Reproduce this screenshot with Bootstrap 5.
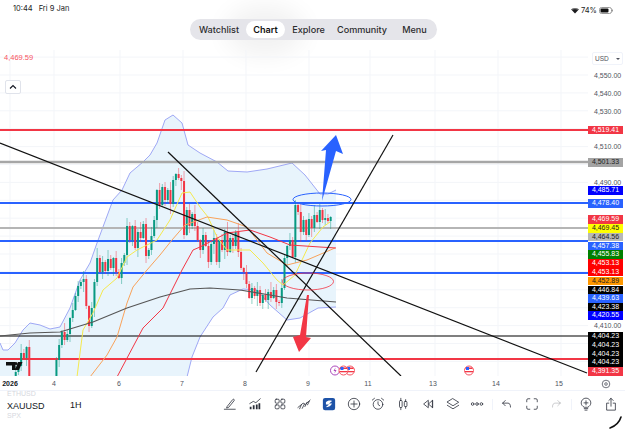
<!DOCTYPE html>
<html lang="en">
<head>
  <meta charset="UTF-8">
  <meta name="viewport" content="width=device-width, initial-scale=1.0">
  <title>XAUUSD chart</title>
  <link href="https://cdn.jsdelivr.net/npm/bootstrap@5.3.0/dist/css/bootstrap.min.css" rel="stylesheet">
  <style>
    html, body { height: 431px; overflow: hidden; background: #fff; }
    body { font-family: "Liberation Sans", Arial, sans-serif; color: #131722; }
    .app-page { width: 625px; height: 431px; position: relative; overflow: hidden; }
    .status-row { height: 17px; padding: 3px 12px 0 13px; font: 7.5px/11px Inter, "Liberation Sans", sans-serif; color: #1c1c1e; }
    .status-left { gap: 6px; }
    .status-right { gap: 2px; }
    .nav-holder { height: 33px; position: relative; align-items: flex-start; padding-top: 2px; }
    .nav-holder::before { content: ""; position: absolute; left: 225px; top: -12px; width: 80px; height: 52px; border-radius: 50%; background: #000; opacity: .05; filter: blur(12px); }
    .tab-pill { position: relative; width: 247px; height: 21px; background: #e5e5ea; border-radius: 10.5px; padding: 2px 0 0 2px; margin-left: 2px; }
    .tab-pill .nav-link { font: 500 9.1px/17px Inter, "Liberation Sans", sans-serif; color: #2c2c2e; padding: 0; height: 17px; border-radius: 8.5px; text-align: center; background: none; }
    .tab-pill .nav-link.active { background: #fff; color: #111; font-weight: 600; }
    .tab-watch { width: 54px; } .tab-chart { width: 39px; } .tab-explore { width: 47px; } .tab-comm { width: 60px; } .tab-menu { width: 45px; }
    .chart-box { width: 625px; height: 326px; position: relative; }
    .chart-svg { display: block; }
    .price-tag { position: absolute; left: 588px; width: 35px; height: 8.7px; font-size: 7px; line-height: 8.7px; text-align: center; color: #fff; }
    .price-plain { position: absolute; left: 594px; font-size: 7px; line-height: 9px; color: #50535e; }
    .last-price { position: absolute; left: 4px; top: 3px; font-size: 7.5px; line-height: 9px; color: #f7525f; }
    .usd-box { position: absolute; left: 592px; top: 2px; width: 31px; height: 13px; padding-left: 2px; background: #fff; border: 1px solid #f0f3fa; border-radius: 2px; font-size: 6.5px; line-height: 11px; color: #50535e; }
    .usd-box i { position: absolute; right: 2px; top: 5px; border: 2px solid transparent; border-top-color: #50535e; }
    .fold-btn { position: absolute; left: 5px; top: 30px; width: 16px; height: 14px; background: #fff; border: 1px solid #e0e3eb; border-radius: 2px; }
    .time-row { height: 15px; position: relative; border-bottom: 1px solid #f0f3fa; }
    .time-row span { position: absolute; top: 3px; font-size: 7px; line-height: 9px; color: #50535e; transform: translateX(-50%); }
    .time-row .year-tag { left: 10px; color: #131722; font-weight: 700; }
    .tool-row { height: 40px; }
    .symbol-col { width: 70px; padding-left: 7px; font-size: 9px; line-height: 11px; height: 29px; overflow: hidden; }
    .symbol-col .faded { color: #d6d8de; font-size: 7px; line-height: 8px; }
    .symbol-col .faded-top { height: 6px; overflow: visible; margin-top: -1px; }
    .symbol-main { margin-top: 5px; }
    .res-tag { width: 12px; font-size: 9px; line-height: 11px; padding-top: 9px; }
    .tool-icons { margin-left: 136px; margin-top: 4px; height: 18px; }
    .tool-slot { width: 24.7px; height: 18px; display: flex; align-items: center; justify-content: center; flex: none; }
    .tool-gap { width: 1px; height: 11px; margin: 0 2px; background: #f0f3fa; flex: none; }
    .screen-corner { position: absolute; right: 2px; bottom: 0; }
  </style>
</head>
<body>
  <div class="app-page d-flex flex-column">
    <div class="status-row d-flex justify-content-between">
      <div class="d-flex status-left"><span>10:44</span><span>Fri 9 Jan</span></div>
      <div class="d-flex align-items-center status-right">
        <svg width="8" height="7" viewBox="0 0 8 7"><path d="M4 6.600 0.200 2.400C2.300.4 5.700.4 7.800 2.400Z" fill="#1c1c1e"/><path d="M1.400 2.500C3 1.300 5 1.300 6.600 2.500" stroke="#fff" stroke-width=".5" fill="none"/></svg>
        <span>74%</span>
        <svg width="14" height="7" viewBox="0 0 14 7"><rect x=".5" y=".5" width="12" height="6" rx="2" fill="#fff" stroke="#999"/><rect x="1.500" y="1.500" width="8" height="4" rx="1" fill="#111"/><rect x="13" y="2.500" width="1" height="2" fill="#999"/></svg>
      </div>
    </div>
    <div class="nav-holder d-flex justify-content-center">
      <ul class="nav tab-pill">
        <li class="nav-item"><a class="nav-link tab-watch" href="#">Watchlist</a></li>
        <li class="nav-item"><a class="nav-link active tab-chart" href="#">Chart</a></li>
        <li class="nav-item"><a class="nav-link tab-explore" href="#">Explore</a></li>
        <li class="nav-item"><a class="nav-link tab-comm" href="#">Community</a></li>
        <li class="nav-item"><a class="nav-link tab-menu" href="#">Menu</a></li>
      </ul>
    </div>

    <div class="chart-box" id="chartBox">
      <svg class="chart-svg" id="chartSvg" width="625" height="326" viewBox="0 50 625 326"></svg>
      <div class="last-price">4,469.59</div>
      <div class="usd-box">USD<i></i></div>
      <div class="fold-btn d-flex align-items-center justify-content-center">
        <svg width="8" height="6" viewBox="0 0 8 6"><path d="M1 4.500 4 1.500 7 4.500" fill="none" stroke="#131722" stroke-width="1.100"/></svg>
      </div>
    </div>

    <div class="time-row" id="timeRow"><span class="year-tag">2026</span></div>

    <div class="tool-row d-flex position-relative">
      <div class="symbol-col">
        <div class="faded faded-top">ETHUSD</div>
        <div class="symbol-main">XAUUSD</div>
        <div class="faded">SPX</div>
      </div>
      <div class="res-tag">1H</div>
      <div class="tool-icons d-flex align-items-center" id="toolIcons"></div>
      <svg class="screen-corner" width="20" height="16" viewBox="0 0 20 16"><path d="M18 2C16.500 7 12.500 11 7 13" fill="none" stroke="#111" stroke-width="1.600" stroke-linecap="round"/></svg>
    </div>
  </div>

  <script src="https://cdn.jsdelivr.net/npm/bootstrap@5.3.0/dist/js/bootstrap.bundle.min.js"></script>
  <script>
    const RED = '#f23645', BLUE = '#2962ff', GREEN = '#089981';
    const py = p => 75 + (4550 - p) * 1.79;
    const svg = [];

    function pts(a) { return a.map(p => p.join(',')).join(' '); }
    function line(x1, y1, x2, y2, col, w, op) {
      svg.push(`<line x1="${x1}" y1="${y1}" x2="${x2}" y2="${y2}" stroke="${col}" stroke-width="${w}" opacity="${op || 1}"/>`);
    }
    function poly(a, col, w, op) {
      svg.push(`<polyline points="${pts(a)}" fill="none" stroke="${col}" stroke-width="${w}" opacity="${op || 1}" stroke-linejoin="round"/>`);
    }

    // grid
    [10, 54, 120, 183, 246, 309, 370, 435, 498, 561].forEach(x => line(x, 50, x, 376, '#f3f5f9', 1));
    for (let p = 4560; p >= 4390; p -= 10) line(0, py(p), 588, py(p), '#f3f5f9', 1);

    // bollinger band
    const upper = [[0,343],[3,350],[8,350],[15,343],[23,330],[30,323],[40,325],[50,329],[60,327],[70,308],[80,280],[90,263],[97,243],[113,200],[122,190],[130,173],[143,162],[150,155],[157,143],[165,120],[173,115],[182,123],[188,145],[200,153],[217,162],[228,171],[247,172],[267,169],[292,163],[305,175],[320,194],[328,194],[336,190]];
    const lower = [[187,377],[192,357],[200,337],[213,317],[223,308],[230,295],[243,289],[257,290],[270,305],[287,320],[300,318],[318,308],[336,307]];
    svg.push(`<polygon points="${pts(upper)} ${pts(lower.slice().reverse())} 0,377" fill="#e8f4fc"/>`);
    poly(upper, '#9fa8f5', 1);
    poly(lower, '#9fa8f5', 1);

    // horizontal levels
    [[130, RED, 2], [162, '#a6a6a6', 2.500], [203, BLUE, 2], [228, '#b5b5b5', 2], [241, BLUE, 2], [273, BLUE, 2], [336, '#000', 1.200], [359, RED, 2]]
      .forEach(l => line(0, l[0], 588, l[0], l[1], l[2]));

    // candles, close as pixel y
    const closes = [378,372,366,353,358,347,378,400,400,400,400,400,400,400,400,400,
      360,345,332,340,334,318,310,296,286,282,279,306,326,308,282,258,272,262,271,259,268,258,272,278,263,255,
      226,240,226,248,232,238,224,256,250,236,220,190,205,187,200,190,204,180,174,178,181,235,210,226,214,226,
      240,250,235,246,262,244,238,262,240,250,232,252,238,246,232,252,268,272,284,298,288,296,290,303,295,300,
      292,298,290,302,303,288,258,246,240,257,205,212,232,220,235,219,228,215,222,210,220,218,221,217];
    const wicks = [3,6,2,9,4,1,7,3,5,2,8,4,1,6,3,10];
    const bar = (i) => 13 + i * 2.715;
    closes.forEach((c, i) => {
      if (i === 0 || c >= 400) return;
      const o = closes[i - 1] >= 400 ? c + 20 : closes[i - 1];
      const x = bar(i), col = c < o ? GREEN : RED;
      const top = Math.min(o, c) - wicks[i % 16], bot = Math.max(o, c) + wicks[(i + 5) % 16];
      line(x, top, x, bot, col, 1, .45);
      const h = Math.max(Math.abs(o - c), 1);
      svg.push(`<rect x="${x - 1}" y="${Math.min(o, c)}" width="2" height="${h}" fill="${col}"/>`);
    });

    // moving averages
    poly([[77,377],[80,353],[83,330],[93,313],[103,290],[117,278],[127,257],[137,250],[157,240],[170,220],[182,193],[190,192],[200,207],[208,217],[217,237],[227,250],[250,250],[263,263],[277,280],[283,285],[295,275],[302,260],[310,243],[323,227],[330,222]], '#f5e94e', 1);
    poly([[90,377],[107,355],[117,337],[127,303],[133,287],[147,270],[160,255],[172,240],[185,225],[207,217],[227,220],[247,227],[267,253],[287,265],[307,260],[335,248]], '#f9a25a', 1);
    poly([[117,377],[143,328],[163,308],[182,270],[193,250],[200,247],[227,233],[250,230],[270,237],[290,245],[320,247],[336,248]], '#f23645', 1);
    poly([[0,336],[30,333],[60,332],[93,322],[127,308],[160,297],[190,289],[210,288],[240,290],[270,295],[287,298],[336,302]], '#555', 1.100);

    // trend lines
    line(0, 143, 587, 373, '#111', 1.200);
    line(168, 152, 401, 376, '#111', 1.200);
    line(256, 372, 393, 135, '#111', 1.200);

    // ellipses and arrows
    svg.push(`<ellipse cx="322" cy="199.500" rx="29" ry="6.500" fill="none" stroke="${BLUE}" stroke-width="1"/>`);
    svg.push(`<ellipse cx="308" cy="281.500" rx="25.500" ry="8.500" fill="none" stroke="${RED}" stroke-width="1" opacity=".8"/>`);
    svg.push(`<polygon points="322,201 326,150 321,151 336,135 343,154 336,151" fill="${BLUE}"/>`);
    svg.push(`<polygon points="307,295 309,295 306,337 311,338 299,352 293,337 300,335" fill="${RED}"/>`);

    // TV logo
    svg.push(`<path d="M6 362H15.500V370H12V365.500H6ZM18 362H22.500L19 370H15Z" fill="#111"/><circle cx="16" cy="363.500" r="1.500" fill="#111"/>`);

    // event markers
    function flag(x) {
      return `<circle cx="${x}" cy="370.500" r="4.500" fill="#fff" stroke="#f7525f"/><rect x="${x - 3.500}" y="367.500" width="7" height="1.500" fill="#f23645"/><rect x="${x - 4}" y="371" width="8" height="1.300" fill="#f23645"/><rect x="${x - 3}" y="367" width="3" height="3" fill="#2962ff"/>`;
    }
    svg.push(`<circle cx="335" cy="370.500" r="4.500" fill="#fff" stroke="#ab47bc"/><path d="M335.500 367.500 333.500 371H335L334.500 373.500 336.500 370H335Z" fill="#ab47bc"/>`);
    svg.push(flag(350), flag(343.500), flag(469));

    document.getElementById('chartSvg').innerHTML = svg.join('');

    // price axis
    const box = document.getElementById('chartBox');
    [[4550, 75], [4540, 93], [4530, 111], [4510, 146.500], [4490, 182.500], [4410, 325.700]].forEach(p => {
      box.insertAdjacentHTML('beforeend', `<div class="price-plain" style="top:${p[1] - 54.500}px">4,${p[0] - 4000}.00</div>`);
    });
    const tags = [
      ['4,519.41', 125.500, RED, '#fff'], ['4,501.33', 158, '#a3a3a3', '#222'], ['4,485.71', 186, '#0000ff', '#fff'], ['4,478.40', 199.300, BLUE, '#fff'],
      ['4,469.59', 215, RED, '#fff'], ['4,469.45', 224, '#ffff00', '#222'], ['4,464.56', 232.500, '#b8b8b8', '#222'], ['4,457.38', 241.500, BLUE, '#fff'],
      ['4,455.83', 250.200, '#008000', '#fff'], ['4,453.13', 259, '#ff0000', '#fff'], ['4,453.13', 267.700, '#ff0000', '#fff'], ['4,452.89', 276.700, '#ff9800', '#222'],
      ['4,446.84', 285.500, '#000', '#fff'], ['4,439.63', 294.200, BLUE, '#fff'], ['4,423.38', 302.900, '#000', '#fff'], ['4,420.55', 311.300, '#0000ff', '#fff'],
      ['4,404.23', 332.200, '#000', '#fff'], ['4,404.23', 340.900, '#000', '#fff'], ['4,404.23', 349.600, '#000', '#fff'], ['4,404.23', 358.300, '#000', '#fff'],
      ['4,391.35', 367.300, RED, '#fff']
    ];
    tags.forEach(t => {
      box.insertAdjacentHTML('beforeend', `<div class="price-tag" style="top:${t[1] - 50}px;background:${t[2]};color:${t[3]}">${t[0]}</div>`);
    });

    // time axis
    const timeRow = document.getElementById('timeRow');
    [[54, '4'], [119, '6'], [182, '7'], [245, '8'], [308, '9'], [368, '11'], [433, '13'], [496, '14'], [559, '15']].forEach(t => {
      timeRow.insertAdjacentHTML('beforeend', `<span style="left:${t[0]}px">${t[1]}</span>`);
    });
    timeRow.insertAdjacentHTML('beforeend', `<svg style="position:absolute;left:601px;top:3px" width="10" height="10" viewBox="0 0 10 10"><circle cx="5" cy="5" r="3.800" fill="none" stroke="#50535e" stroke-width=".8"/><circle cx="5" cy="5" r="1.300" fill="none" stroke="#50535e" stroke-width=".8"/></svg>`);

    // toolbar icons
    const S = 'fill="none" stroke="#2a2e39" stroke-width=".9" stroke-linecap="round" stroke-linejoin="round"';
    const icons = [
      `<path d="M5 10.500 11 3C12 1.800 13.500 3 12.700 4.200L6.500 11.800 4.500 12.500Z M1.500 14H14" ${S}/>`,
      `<path d="M2 7.500 6 5 9 6.500 14 2" ${S}/><path d="M2 14V11H4V14ZM5.500 14V9.500H7.500V14ZM9 14V8.500H11V14ZM12 14V7H14V14Z" fill="#2a2e39"/>`,
      `<rect x="2.500" y="2.500" width="4.500" height="4.500" rx="1.200" ${S}/><rect x="9" y="2.500" width="4.500" height="4.500" rx="1.200" ${S}/><rect x="2.500" y="9" width="4.500" height="4.500" rx="1.200" ${S}/><rect x="9" y="9" width="4.500" height="4.500" rx="1.200" ${S}/>`,
      `<path d="M1 12 7 7 9.500 8.500 15 3.500M3 13.500 5 9M6 13 8.500 8M9 11 11.500 6M12 9 14 5" ${S}/>`,
      `<rect x="1" y="1" width="14" height="14" rx="2.500" fill="#1e53a8"/><path d="M4.500 6C6 4 9 3.500 11.500 4.500L8 7.500H11.500C10 10.500 7 12 4.500 11.500L8 8.500H4.500Z" fill="#fff"/>`,
      `<circle cx="8" cy="8" r="6.500" ${S}/><path d="M8 4.500V11.500M4.500 8H11.500" ${S}/>`,
      `<circle cx="8" cy="8.500" r="5.500" ${S}/><path d="M8 5.500V8.500L10 10M1.500 3.500 4 1.500M14.500 3.500 12 1.500" ${S}/>`,
      `<rect x="4" y="4" width="3" height="8" rx="1" ${S}/><rect x="9.500" y="5" width="3" height="6" rx="1" ${S}/><path d="M5.500 1.500V4M5.500 12V14.500M11 3V5M11 11V13" ${S}/>`,
      `<path d="M8 4 3 8 8 12ZM13 4 8.500 8 13 12Z M13 4V12" ${S}/>`,
      `<path d="M8 2 14.500 6 8 10 1.500 6Z M1.500 9.500 8 13.500 14.500 9.500" ${S}/>`,
      `<circle cx="3" cy="8" r="1.500" ${S}/><circle cx="8" cy="8" r="1.500" ${S}/><circle cx="13" cy="8" r="1.500" ${S}/>`,
      null,
      `<path d="M6 4 3 7 6 10M3 7H9C11 7 12 8.500 12 11.500" ${S}/>`,
      `<path d="M2 5.500V3.500C2 2.500 2.500 2 3.500 2H5.500M10.500 2H12.500C13.500 2 14 2.500 14 3.500V5.500M14 10.500V12.500C14 13.500 13.500 14 12.500 14H10.500M5.500 14H3.500C2.500 14 2 13.500 2 12.500V10.500" ${S}/>`,
      `<path d="M10 4 13 7 10 10M13 7H7C5 7 4 8.500 4 11.500" ${S} opacity=".3"/>`,
      null,
      `<path d="M5.500 11.500C4 10.500 2.500 9 2.500 6.800A5.500 5.500 0 0 1 13.500 6.800C13.500 9 12 10.500 10.500 11.500ZM6 13.300H10M6.800 15H9.200M8 4.300V9M5.700 6.700H10.300" ${S}/>`,
      `<path d="M5.500 7H3V15H13V7H10.500M8 10.500V1.500M5.500 4 8 1.500 10.500 4" ${S}/>`
    ];
    document.getElementById('toolIcons').innerHTML = icons.map(ic =>
      ic === null ? '<div class="tool-gap"></div>' : `<div class="tool-slot"><svg width="14" height="14" viewBox="0 0 16 16">${ic}</svg></div>`
    ).join('');
  </script>
</body>
</html>
